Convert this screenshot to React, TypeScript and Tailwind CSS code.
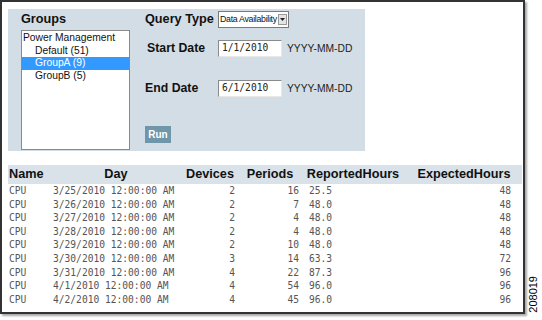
import React from 'react';

type Row = {
  name: string;
  day: string;
  devices: number;
  periods: number;
  reported: string;
  expected: number;
};

const rows: Row[] = [
  { name: 'CPU', day: '3/25/2010 12:00:00 AM', devices: 2, periods: 16, reported: '25.5', expected: 48 },
  { name: 'CPU', day: '3/26/2010 12:00:00 AM', devices: 2, periods: 7, reported: '48.0', expected: 48 },
  { name: 'CPU', day: '3/27/2010 12:00:00 AM', devices: 2, periods: 4, reported: '48.0', expected: 48 },
  { name: 'CPU', day: '3/28/2010 12:00:00 AM', devices: 2, periods: 4, reported: '48.0', expected: 48 },
  { name: 'CPU', day: '3/29/2010 12:00:00 AM', devices: 2, periods: 10, reported: '48.0', expected: 48 },
  { name: 'CPU', day: '3/30/2010 12:00:00 AM', devices: 3, periods: 14, reported: '63.3', expected: 72 },
  { name: 'CPU', day: '3/31/2010 12:00:00 AM', devices: 4, periods: 22, reported: '87.3', expected: 96 },
  { name: 'CPU', day: '4/1/2010 12:00:00 AM', devices: 4, periods: 54, reported: '96.0', expected: 96 },
  { name: 'CPU', day: '4/2/2010 12:00:00 AM', devices: 4, periods: 45, reported: '96.0', expected: 96 },
];

const groups = [
  { label: 'Power Management', indent: false, selected: false },
  { label: 'Default (51)', indent: true, selected: false },
  { label: 'GroupA (9)', indent: true, selected: true },
  { label: 'GroupB (5)', indent: true, selected: false },
];

const sans = "font-['Liberation_Sans',Arial,sans-serif]";
const mono = "font-['DejaVu_Sans_Mono',monospace]";

const DateField: React.FC<{ value: string }> = ({ value }) => (
  <div className="flex items-center gap-[5px]">
    <div
      className={`w-[64px] h-[17px] bg-white border border-t-[#8a8a8a] border-l-[#8a8a8a] border-r-[#e8e8e8] border-b-[#e8e8e8] pl-[3px] flex items-center text-[9.6px] text-[#222] ${mono}`}
    >
      {value}
    </div>
    <span className="text-[10.3px] text-[#222]">YYYY-MM-DD</span>
  </div>
);

export default function App() {
  return (
    <div className={`w-[542px] h-[320px] bg-white flex ${sans}`}>
      <div className="w-[525px] h-[314px] border-2 border-[#333] shadow-[2px_2px_2px_rgba(0,0,0,0.35)] pl-[6px] pt-[7px]">
        {/* query panel */}
        <div className="w-[357px] h-[142px] bg-[#d3dde5] flex pl-[13px]">
          <div className="w-[109px] flex flex-col">
            <div className="text-[12.7px] font-bold text-[#111] h-[21px] pt-[3px] leading-[14px]">Groups</div>
            <div className="h-[120px] bg-white border border-[#8a8a8a] pt-[1px] text-[10.3px] leading-[12.7px] text-[#111]">
              {groups.map((g) => (
                <div
                  key={g.label}
                  className={`${g.indent ? 'pl-[13px]' : 'pl-[1px]'} ${g.selected ? 'bg-[#3399ff] text-white' : ''}`}
                >
                  {g.label}
                </div>
              ))}
            </div>
          </div>

          <div className="ml-[15px] flex flex-col pt-[2px]">
            <div className="flex items-center h-[17px]">
              <span className="w-[73px] text-[12.7px] font-bold text-[#111] whitespace-nowrap">Query Type</span>
              <div className="w-[71px] h-[17px] bg-white border border-[#7a7a7a] flex items-center pl-[1px] text-[8.8px] tracking-[-0.3px] text-[#111] overflow-hidden">
                <span className="flex-1 whitespace-nowrap leading-none">Data Availability</span>
                <div className="shrink-0 w-[9px] h-[11px] mr-[1px] bg-[#e4e4e4] border border-[#999] flex items-center justify-center">
                  <svg width="5" height="3" viewBox="0 0 5 3">
                    <path d="M0 0 L5 0 L2.5 3 Z" fill="#222" />
                  </svg>
                </div>
              </div>
            </div>

            <div className="flex items-center h-[17px] mt-[12px]">
              <span className="w-[73px] pl-[2px] text-[12.3px] font-bold text-[#111]">Start Date</span>
              <DateField value="1/1/2010" />
            </div>

            <div className="flex items-center h-[17px] mt-[23px]">
              <span className="w-[73px] text-[12.3px] font-bold text-[#111]">End Date</span>
              <DateField value="6/1/2010" />
            </div>

            <div className="mt-[24px]">
              <button className="w-[26px] h-[17px] bg-[#6f96a9] text-white text-[10px] font-bold leading-[17px] text-center">
                Run
              </button>
            </div>
          </div>
        </div>

        {/* results */}
        <table className="mt-[14px] w-[514px] table-fixed border-collapse">
          <colgroup>
            <col className="w-[42px]" />
            <col className="w-[132px]" />
            <col className="w-[56px]" />
            <col className="w-[64px]" />
            <col className="w-[102px]" />
            <col className="w-[118px]" />
          </colgroup>
          <thead>
            <tr className="bg-[#d9e2e9] h-[19px] text-[12.7px] font-bold text-[#111]">
              <th className="text-left pl-[1px] font-bold">Name</th>
              <th className="text-center font-bold">Day</th>
              <th className="text-center font-bold">Devices</th>
              <th className="text-center font-bold">Periods</th>
              <th className="text-center font-bold">ReportedHours</th>
              <th className="text-center font-bold pl-[2px]">ExpectedHours</th>
            </tr>
          </thead>
          <tbody className={`text-[9.6px] leading-[13.6px] text-[#555] ${mono}`}>
            {rows.map((r) => (
              <tr key={r.day} className="h-[13.6px]">
                <td className="pl-[1px] py-0">{r.name}</td>
                <td className="pl-[3px] whitespace-nowrap">{r.day}</td>
                <td className="text-right pr-[3px]">{r.devices}</td>
                <td className="text-right pr-[3px]">{r.periods}</td>
                <td className="pl-[7px]">{r.reported}</td>
                <td className="text-right pr-[11px]">{r.expected}</td>
              </tr>
            ))}
          </tbody>
        </table>
      </div>

      <div className="flex-1 flex items-end justify-center pb-[7px]">
        <span className="[writing-mode:vertical-rl] rotate-180 text-[11px] text-black leading-none">208019</span>
      </div>
    </div>
  );
}
